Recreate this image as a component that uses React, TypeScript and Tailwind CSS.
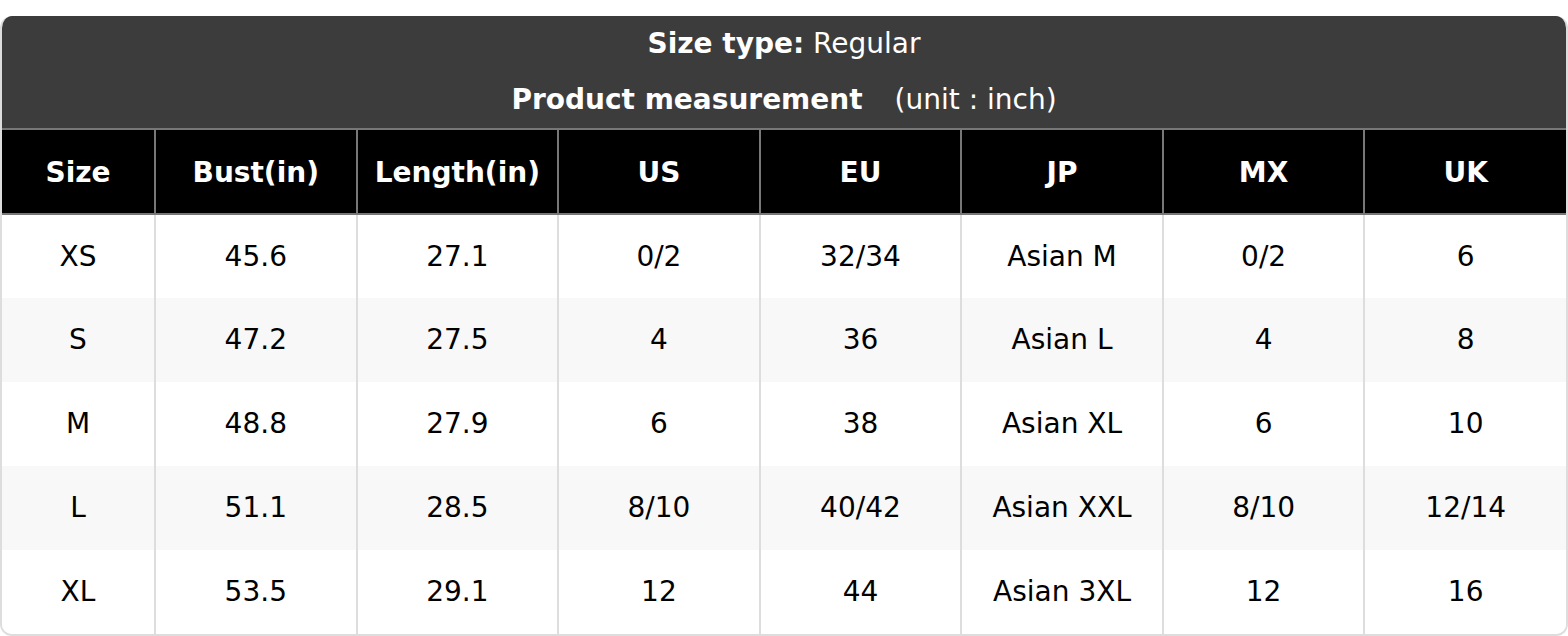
import React from 'react';

const columns = ['Size', 'Bust(in)', 'Length(in)', 'US', 'EU', 'JP', 'MX', 'UK'];

const rows: string[][] = [
  ['XS', '45.6', '27.1', '0/2', '32/34', 'Asian M', '0/2', '6'],
  ['S', '47.2', '27.5', '4', '36', 'Asian L', '4', '8'],
  ['M', '48.8', '27.9', '6', '38', 'Asian XL', '6', '10'],
  ['L', '51.1', '28.5', '8/10', '40/42', 'Asian XXL', '8/10', '12/14'],
  ['XL', '53.5', '29.1', '12', '44', 'Asian 3XL', '12', '16'],
];

export default function App() {
  return (
    <div className="bg-white pt-4" style={{ fontFamily: '"DejaVu Sans", Verdana, sans-serif' }}>
      <div className="overflow-hidden rounded-[12px] border-2 border-t-0 border-[#dddddd]">
        {/* Title block */}
        <div className="bg-[#3c3c3c] text-white text-[28px] text-center">
          <div className="h-[56px] leading-[56px]">
            <span className="font-bold">Size type:</span> Regular
          </div>
          <div className="h-[56px] leading-[56px]">
            <span className="font-bold">Product measurement</span>
            <span className="ml-[32px]">(unit : inch)</span>
          </div>
        </div>

        <table className="w-full table-fixed border-collapse text-center">
          <colgroup>
            <col className="w-[153px]" />
            {columns.slice(1).map((c) => (
              <col key={c} />
            ))}
          </colgroup>
          <thead>
            <tr className="bg-black text-white">
              {columns.map((c, i) => (
                <th
                  key={c}
                  className={`h-[85px] pt-[2px] border-2 border-[#777777] text-[28px] font-bold ${i === 0 ? 'border-l-0' : ''} ${i === columns.length - 1 ? 'border-r-0' : ''}`}
                >
                  {c}
                </th>
              ))}
            </tr>
          </thead>
          <tbody>
            {rows.map((r, ri) => (
              <tr key={r[0]} className={ri % 2 === 1 ? 'bg-[#f8f8f8]' : 'bg-white'}>
                {r.map((v, i) => (
                  <td
                    key={i}
                    className={`h-[84px] border-x-2 border-[#dddddd] text-[28px] text-black ${i === 0 ? 'border-l-0' : ''} ${i === r.length - 1 ? 'border-r-0' : ''}`}
                  >
                    {v}
                  </td>
                ))}
              </tr>
            ))}
          </tbody>
        </table>
      </div>
    </div>
  );
}
